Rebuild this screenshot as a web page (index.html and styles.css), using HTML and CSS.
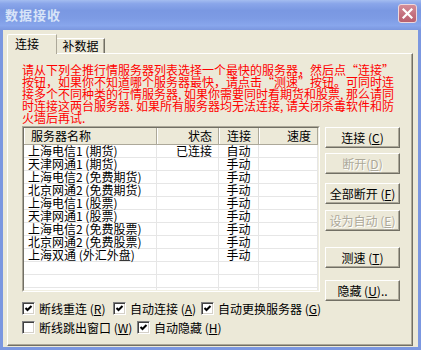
FILE: index.html
```html
<!DOCTYPE html>
<html lang="zh-CN">
<head>
  <meta charset="UTF-8" />
  <meta name="viewport" content="width=device-width, initial-scale=1.0"/>
  <title>数据接收</title>
  <link rel="stylesheet" href="styles.css">
</head>
<body>

  <div class="window">
    <div class="titlebar">
      <span class="title">数据接收</span>
      <span class="close">
        <svg width="11" height="11" viewBox="0 0 11 11">
          <path d="M1.5 1.5 L9.5 9.5 M9.5 1.5 L1.5 9.5" stroke="#fff" stroke-width="2.2" stroke-linecap="square"/>
        </svg>
      </span>
    </div>

    <div class="content">
      <div class="tabs">
        <div class="tab active">连接</div>
        <div class="tab">补数据</div>
      </div>

      <div class="panel">
        <p class="notice">
          <span>请从下列全推行情服务器列表选择一个最快的服务器，然后点“连接”</span>
          <span>按钮，如果你不知道哪个服务器最快，请点击“测速”按钮。可同时连</span>
          <span>接多个不同种类的行情服务器, 如果你需要同时看期货和股票, 那么请同</span>
          <span>时连接这两台服务器. 如果所有服务器均无法连接, 请关闭杀毒软件和防</span>
          <span>火墙后再试.</span>
        </p>

        <div class="middle">
          <div class="list">
            <div class="list-inner">
              <div class="list-head">
                <div class="hcell">服务器名称</div>
                <div class="hcell right">状态</div>
                <div class="hcell center">连接</div>
                <div class="hcell right">速度</div>
              </div>
              <div class="row"><div class="cell">上海电信1 (期货)</div><div class="cell right">已连接</div><div class="cell center">自动</div><div class="cell"></div></div>
              <div class="row"><div class="cell">天津网通1 (期货)</div><div class="cell"></div><div class="cell center">手动</div><div class="cell"></div></div>
              <div class="row"><div class="cell">上海电信2 (免费期货)</div><div class="cell"></div><div class="cell center">手动</div><div class="cell"></div></div>
              <div class="row"><div class="cell">北京网通2 (免费期货)</div><div class="cell"></div><div class="cell center">手动</div><div class="cell"></div></div>
              <div class="row"><div class="cell">上海电信1 (股票)</div><div class="cell"></div><div class="cell center">手动</div><div class="cell"></div></div>
              <div class="row"><div class="cell">天津网通1 (股票)</div><div class="cell"></div><div class="cell center">手动</div><div class="cell"></div></div>
              <div class="row"><div class="cell">上海电信2 (免费股票)</div><div class="cell"></div><div class="cell center">手动</div><div class="cell"></div></div>
              <div class="row"><div class="cell">北京网通2 (免费股票)</div><div class="cell"></div><div class="cell center">手动</div><div class="cell"></div></div>
              <div class="row"><div class="cell">上海双通 (外汇外盘)</div><div class="cell"></div><div class="cell center">手动</div><div class="cell"></div></div>
              <div class="row"><div class="cell"></div><div class="cell"></div><div class="cell"></div><div class="cell"></div></div>
              <div class="row"><div class="cell"></div><div class="cell"></div><div class="cell"></div><div class="cell"></div></div>
              <div class="row"><div class="cell"></div><div class="cell"></div><div class="cell"></div><div class="cell"></div></div>
            </div>
          </div>

          <div class="buttons">
            <button class="btn">连接 (<u>C</u>)</button>
            <button class="btn gap-1" disabled>断开(<u>D</u>)</button>
            <button class="btn gap-2">全部断开 (<u>F</u>)</button>
            <button class="btn gap-3" disabled>设为自动 (<u>E</u>)</button>
            <button class="btn gap-4">测速 (<u>T</u>)</button>
            <button class="btn gap-5">隐藏 (<u>U</u>)..</button>
          </div>
        </div>

        <div class="options">
          <div class="opt-row">
            <label class="check w-reconnect"><span class="box"><svg width="9" height="9" viewBox="0 0 9 9"><polyline points="1.5,4 3.5,6 7.5,2" fill="none" stroke="#000" stroke-width="2"/></svg></span>断线重连 (<u>R</u>)</label>
            <label class="check w-auto"><span class="box"><svg width="9" height="9" viewBox="0 0 9 9"><polyline points="1.5,4 3.5,6 7.5,2" fill="none" stroke="#000" stroke-width="2"/></svg></span>自动连接 (<u>A</u>)</label>
            <label class="check"><span class="box"><svg width="9" height="9" viewBox="0 0 9 9"><polyline points="1.5,4 3.5,6 7.5,2" fill="none" stroke="#000" stroke-width="2"/></svg></span>自动更换服务器 (<u>G</u>)</label>
          </div>
          <div class="opt-row">
            <label class="check w-popup"><span class="box"></span>断线跳出窗口 (<u>W</u>)</label>
            <label class="check"><span class="box"><svg width="9" height="9" viewBox="0 0 9 9"><polyline points="1.5,4 3.5,6 7.5,2" fill="none" stroke="#000" stroke-width="2"/></svg></span>自动隐藏 (<u>H</u>)</label>
          </div>
        </div>
      </div>
    </div>
  </div>

</body>
</html>
```

FILE: styles.css
```css
* {
  box-sizing: border-box;
}

body {
  margin: 0;
  font-family: "Noto Sans CJK SC", "Liberation Sans", sans-serif;
  font-size: 12px;
  color: #000;
  background-color: #ece9d8;
}

.window {
  width: 421px;
  height: 350px;
}

.titlebar {
  height: 30px;
  display: flex;
  align-items: center;
  justify-content: space-between;
  padding: 0 4px 0 5px;
  background: linear-gradient(to bottom, #a4bdf0 0%, #8aa6ea 12%, #7a98e2 35%, #7d9be4 60%, #88a6ec 85%, #7b97df 100%);
}

.title {
  color: #d8e4f8;
  font-weight: bold;
  font-size: 13px;
  letter-spacing: 1px;
  line-height: 14px;
}

.close {
  width: 19px;
  height: 19px;
  margin-top: -3px;
  border: 1px solid #eed8dc;
  border-radius: 3px;
  background: linear-gradient(to bottom, #d48d98, #c26e7c 60%, #b8606f);
  display: flex;
  align-items: center;
  justify-content: center;
}

.content {
  height: 320px;
  border: 3px solid #7b97e0;
  border-top: none;
  background-color: #ece9d8;
}

/* tabs */
.tabs {
  height: 23px;
  display: flex;
  align-items: flex-end;
  padding-left: 4px;
}

.tab {
  height: 15px;
  width: 48px;
  line-height: 14px;
  text-align: center;
  border-top: 1px solid #fff;
  border-right: 1px solid #716f64;
  box-shadow: inset -1px 0 #aca899;
}

.tab.active {
  position: relative;
  z-index: 1;
  width: 50px;
  height: 20px;
  margin-bottom: -1px;
  line-height: 17px;
  text-align: left;
  padding-left: 7px;
  border-left: 1px solid #fff;
  border-right: 1px solid #aca899;
  border-top-left-radius: 2px;
  box-shadow: none;
  background-color: #ece9d8;
}

/* panel */
.panel {
  width: 406px;
  height: 293px;
  margin-left: 4px;
  padding: 10px 0 0 14px;
  border-top: 1px solid #fff;
  border-left: 1px solid #fff;
  border-right: 1px solid #716f64;
  border-bottom: 1px solid #716f64;
  box-shadow: inset -1px -1px #aca899;
}

.notice {
  margin: 0;
  color: #ff0000;
  line-height: 12px;
}

.notice span {
  display: block;
  white-space: nowrap;
}

.middle {
  display: flex;
  align-items: flex-start;
  gap: 5px;
  height: 166px;
  margin-top: 2px;
}

/* server list */
.list {
  width: 298px;
  height: 166px;
  border: 1px solid;
  border-color: #aca899 #fff #fff #aca899;
}

.list-inner {
  height: 100%;
  overflow: hidden;
  background-color: #fff;
  border: 1px solid;
  border-color: #716f64 #f1efe2 #f1efe2 #716f64;
}

.list-head,
.row {
  display: grid;
  grid-template-columns: 133px 62px 40px 59px;
}

.list-head {
  height: 17px;
  background-color: #ece9d8;
  border-bottom: 1px solid #aca899;
}

.hcell {
  line-height: 15px;
  padding: 0 6px;
  border-left: 1px solid #fff;
  border-right: 1px solid #aca899;
  white-space: nowrap;
}

.row {
  height: 13px;
}

.cell {
  line-height: 12px;
  padding: 0 6px 0 4px;
  border-right: 1px solid #e6e6e6;
  border-bottom: 1px solid #e6e6e6;
  white-space: nowrap;
}

.right {
  text-align: right;
}

.center {
  text-align: center;
  padding: 0;
}

/* buttons */
.buttons {
  display: flex;
  flex-direction: column;
  padding-top: 1px;
}

.btn {
  width: 75px;
  height: 21px;
  padding: 0;
  font-family: inherit;
  font-size: 12px;
  line-height: 17px;
  color: #000;
  background-color: #ece9d8;
  border: 1px solid;
  border-color: #fff #716f64 #716f64 #fff;
  box-shadow: inset -1px -1px #aca899;
}

.btn:disabled {
  color: #aca899;
  text-shadow: 1px 1px #fff;
}

.gap-1 { margin-top: 5px; }
.gap-2 { margin-top: 9px; }
.gap-3 { margin-top: 6px; }
.gap-4 { margin-top: 16px; }
.gap-5 { margin-top: 12px; }

/* options */
.options {
  display: flex;
  flex-direction: column;
  gap: 6px;
  margin-top: 10px;
}

.opt-row {
  display: flex;
  height: 13px;
}

.check {
  display: flex;
  align-items: center;
  line-height: 13px;
  white-space: nowrap;
}

.w-reconnect { width: 91px; }
.w-auto { width: 88px; }
.w-popup { width: 115px; }

.box {
  width: 13px;
  height: 13px;
  margin-right: 4px;
  background-color: #fff;
  border: 1px solid;
  border-color: #808080 #fff #fff #808080;
  box-shadow: inset 1px 1px #404040, inset -1px -1px #d4d0c8;
  display: flex;
  align-items: center;
  justify-content: center;
}
```
